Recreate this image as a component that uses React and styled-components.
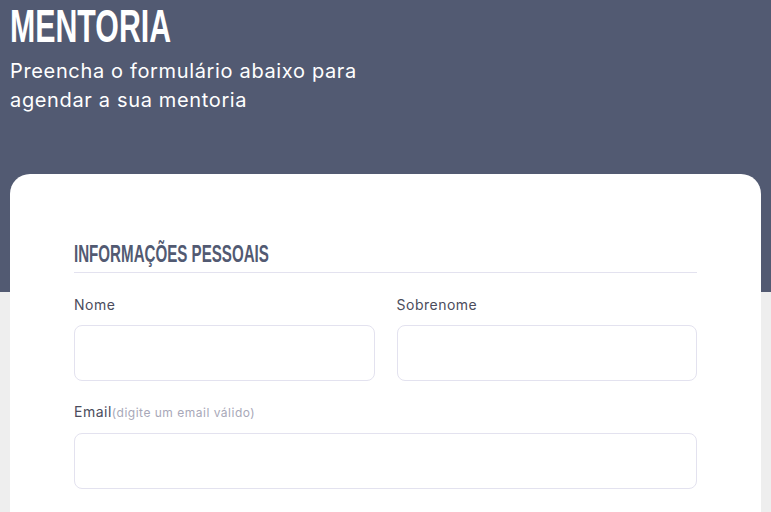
import React from "react";
import styled, { createGlobalStyle } from "styled-components";

const Global = createGlobalStyle`
  html, body { margin: 0; padding: 0; background: #eeeeee; }
  body { font-family: "Inter", "Open Sans", sans-serif; }
  * { box-sizing: border-box; }
`;

const Header = styled.header`
  background: #525a72;
  height: 292px;
  padding: 0 10px;
  color: #ffffff;
`;

const TitleRow = styled.div`
  height: 51px;
`;

const Title = styled.h1`
  margin: 0;
  display: inline-block;
  font-family: "Liberation Sans", sans-serif;
  font-weight: 700;
  font-size: 47px;
  line-height: 51px;
  white-space: nowrap;
  transform: scaleX(0.645);
  transform-origin: left center;
`;

const Subtitle = styled.p`
  margin: 6px 0 0;
  font-family: "Inter", sans-serif;
  font-size: 20px;
  line-height: 29px;
  letter-spacing: 0.65px;
  font-weight: 400;
  max-width: 380px;
`;

const Card = styled.main`
  background: #ffffff;
  margin: -118px 10px 0;
  border-radius: 20px 20px 0 0;
  padding: 66px 64px 40px;
`;

const Section = styled.section`
  display: flex;
  flex-direction: column;
`;

const SectionTitle = styled.h2`
  margin: 0 0 22px;
  padding-bottom: 4px;
  border-bottom: 1px solid #e3e2ef;
  font-family: "Liberation Sans", sans-serif;
  font-weight: 700;
  font-size: 24px;
  line-height: 28px;
  color: #525a72;
  white-space: nowrap;
`;

const TitleText = styled.span`
  display: inline-block;
  transform: scaleX(0.63);
  transform-origin: left center;
`;

const Grid = styled.div`
  display: grid;
  grid-template-columns: ${(p) => (p.$cols === 2 ? "1fr 1fr" : "1fr")};
  column-gap: 22px;
  margin-bottom: ${(p) => p.$mb || 0}px;
`;

const Field = styled.label`
  display: flex;
  flex-direction: column;
`;

const Label = styled.span`
  font-family: "Inter", sans-serif;
  font-size: 14px;
  line-height: 20px;
  letter-spacing: 0.5px;
  color: #4b4c5c;
  margin-bottom: 10px;
`;

const Hint = styled.span`
  font-size: 12px;
  letter-spacing: 0.5px;
  color: #a8a8b8;
`;

const Input = styled.input`
  height: 56px;
  border: 1px solid #e3e2ef;
  border-radius: 8px;
  background: #ffffff;
  outline: none;
  padding: 0 14px;
  font-size: 14px;
`;

export default function App() {
  return (
    <>
      <Global />
      <Header>
        <TitleRow>
          <Title>MENTORIA</Title>
        </TitleRow>
        <Subtitle>Preencha o formulário abaixo para agendar a sua mentoria</Subtitle>
      </Header>
      <Card>
        <Section>
          <SectionTitle>
            <TitleText>INFORMAÇÕES PESSOAIS</TitleText>
          </SectionTitle>
          <Grid $cols={2} $mb={21}>
            <Field>
              <Label>Nome</Label>
              <Input type="text" />
            </Field>
            <Field>
              <Label>Sobrenome</Label>
              <Input type="text" />
            </Field>
          </Grid>
          <Grid $cols={1}>
            <Field>
              <Label>
                Email<Hint>(digite um email válido)</Hint>
              </Label>
              <Input type="email" />
            </Field>
          </Grid>
        </Section>
      </Card>
    </>
  );
}
